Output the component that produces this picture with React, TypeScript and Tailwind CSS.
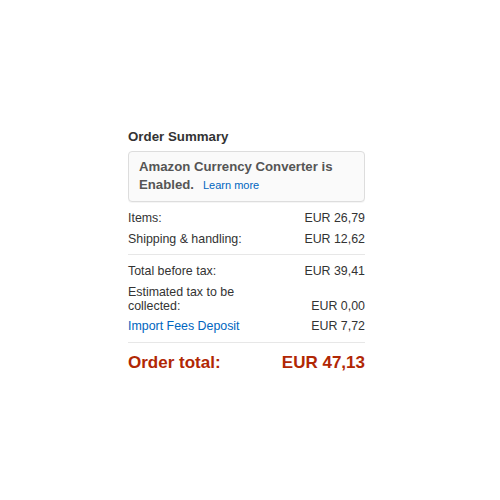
import React from "react";

export default function App() {
  return (
    <div className="w-[500px] h-[500px] bg-white" style={{ fontFamily: '"Liberation Sans", Arial, sans-serif' }}>
      <div className="pt-[129px] pl-[128px] w-[365px]">
        <div className="w-[237px]">
          <div className="text-[13.3px] leading-[16px] font-bold text-[#333]">Order Summary</div>
          <div className="mt-[6px] border border-[#ddd] rounded-[4px] bg-[#fafafa] px-[10px] pt-[6px] pb-[7px] shadow-[0_1px_0_rgba(0,0,0,0.04)]">
            <div className="text-[13.2px] leading-[18px] font-bold text-[#555]">Amazon Currency Converter is</div>
            <div className="flex items-baseline h-[18px]">
              <span className="text-[13.2px] leading-[18px] font-bold text-[#555]">Enabled.</span>
              <span className="text-[11px] leading-[18px] text-[#0066c0] ml-[9px]">Learn more</span>
            </div>
          </div>
          <div className="mt-[6px] text-[12.4px] leading-[15px] text-[#333]">
            <div className="flex justify-between py-[3px]">
              <span>Items:</span>
              <span>EUR 26,79</span>
            </div>
            <div className="flex justify-between py-[3px]">
              <span>Shipping &amp; handling:</span>
              <span>EUR 12,62</span>
            </div>
            <div className="h-px bg-[#e7e7e7] mt-[4px] mb-[7px]" />
            <div className="flex justify-between py-[2px]">
              <span>Total before tax:</span>
              <span>EUR 39,41</span>
            </div>
            <div className="flex justify-between items-end leading-[14px] py-[4px]">
              <span className="w-[125px]">Estimated tax to be collected:</span>
              <span>EUR 0,00</span>
            </div>
            <div className="flex justify-between pt-[2px] pb-[3px]">
              <span className="text-[#0066c0]">Import Fees Deposit</span>
              <span>EUR 7,72</span>
            </div>
            <div className="h-px bg-[#e7e7e7] mt-[5px] mb-[7px]" />
            <div className="flex justify-between py-[2px] text-[17px] leading-[21px] font-bold text-[#b12704]">
              <span>Order total:</span>
              <span>EUR 47,13</span>
            </div>
          </div>
        </div>
      </div>
    </div>
  );
}
